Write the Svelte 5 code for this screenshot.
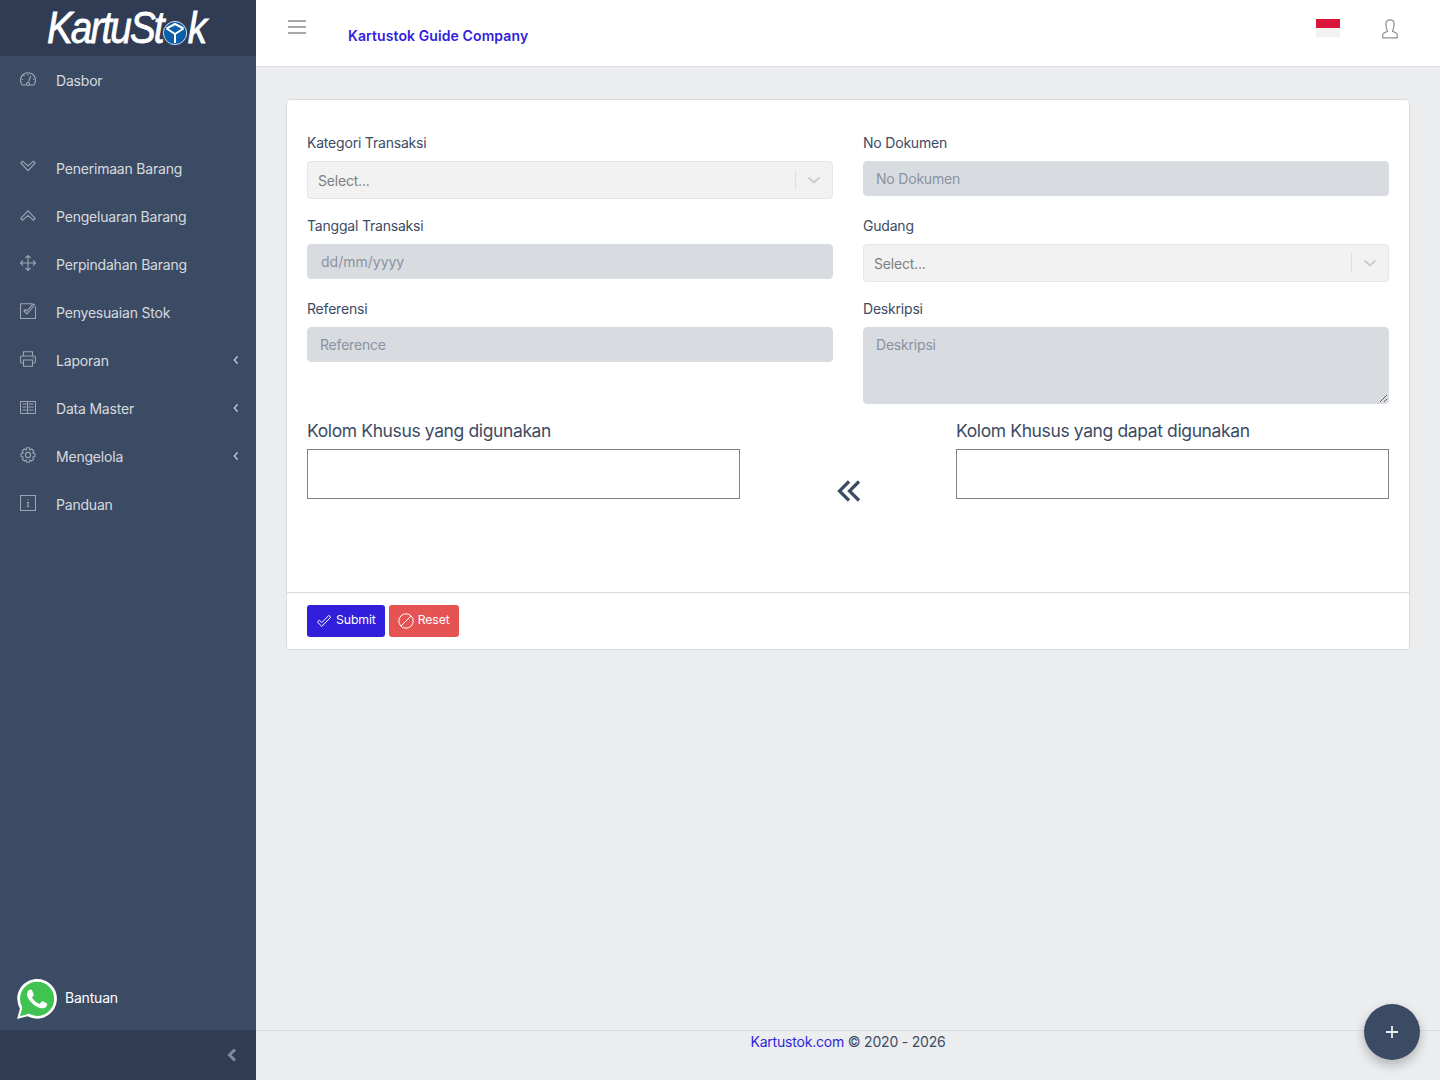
<script>
	const navTop = [{ label: 'Dasbor', d: 'M3.4 14H2.2A7.5 7.5 0 1 1 13.8 14H12.6M8.7 10.6L10.6 5M8 3V4.4M3 8.5H1.8M14.2 8.5H13M4.4 5L3.6 4.2M6.4 14H3.4M9.6 14H12.6M9.5 13a1.5 1.5 0 1 1-3 0a1.5 1.5 0 0 1 3 0z' }];

	const navMain = [
		{ label: 'Penerimaan Barang', d: 'M.8 4L8 11.6L15.2 4L13.4 2.2L8 7L2.6 2.2Z' },
		{ label: 'Pengeluaran Barang', d: 'M.8 11.4L8 3.8L15.2 11.4L13.4 13.2L8 8.4L2.6 13.2Z' },
		{ label: 'Perpindahan Barang', d: 'M8 .6V15.4M.6 8H15.4M5.4 3L8 .6L10.6 3M5.4 13L8 15.4L10.6 13M3 5.4L.6 8L3 10.6M13 5.4L15.4 8L13 10.6' },
		{ label: 'Penyesuaian Stok', d: 'M12 .8H.5V15.5H15.5V3.5M4 8L7 11L14.5 2L13 .8L7 8L5.2 6.6Z' },
		{ label: 'Laporan', chevron: true, d: 'M3.5 5V.8H12.5V5M3.5 12H1.8Q.6 12 .6 10.8V6.4Q.6 5 2 5H14Q15.4 5 15.4 6.4V10.8Q15.4 12 14.2 12H12.5M3.5 9H12.5V15.2H3.5ZM12.5 7H13.5' },
		{ label: 'Data Master', chevron: true, d: 'M.5 2.5H15.5V14.5H.5ZM2.5 5H6.5M2.5 8H6.5M2.5 11H6.5M8.5 5H13.5M8.5 8H13.5M8.5 11H13.5M7.5 2.5V14.5' },
		{ label: 'Mengelola', chevron: true, d: 'M6.6 .8H9.4L9.9 3L11.7 2L13.8 4L12.8 5.9L15 6.6V9.4L12.8 10.1L13.8 12L11.7 14L9.9 13L9.4 15.2H6.6L6.1 13L4.3 14L2.2 12L3.2 10.1L1 9.4V6.6L3.2 5.9L2.2 4L4.3 2L6.1 3ZM10.6 8a2.6 2.6 0 1 1-5.2 0a2.6 2.6 0 0 1 5.2 0z' },
		{ label: 'Panduan', d: 'M.5 .5H15.5V15.5H.5ZM8.2 4.4V5.4M7 7.6H8.4L7.8 11.4Q7.7 12.2 9 11.6' }
	];
</script>

<div class="layout">
	<aside class="sidebar">
		<div class="brand">
			<span class="logo">KartuSt<svg class="logo-cube" viewBox="0 0 24 24" preserveAspectRatio="none" aria-hidden="true">
					<circle cx="12" cy="12" r="11.6" fill="#0b5ea8" stroke="#fff" stroke-width=".8" />
					<path d="M12 13V22M12 13L3.5 7.5M12 13L20.5 7.5M3.5 7.5L12 3L20.5 7.5" fill="none" stroke="#fff" stroke-width="2" />
				</svg>k</span>
		</div>

		<nav class="nav">
			{#each navTop as item}
				<a class="nav-link" href="#top">
					<svg class="nav-icon" viewBox="0 0 16 16"><path d={item.d} /></svg>
					{item.label}
				</a>
			{/each}
			<div class="nav-gap"></div>
			{#each navMain as item}
				<a class="nav-link" href="#top">
					<svg class="nav-icon" viewBox="0 0 16 16"><path d={item.d} /></svg>
					{item.label}
					{#if item.chevron}
						<svg class="nav-chevron" viewBox="0 0 6 10"><path d="M4.6 1.4L1.4 5L4.6 8.6" /></svg>
					{/if}
				</a>
			{/each}
		</nav>

		<div class="help">
			<svg class="wa" viewBox="0 0 24 24" aria-hidden="true">
				<path fill="#fff" d="M.057 24l1.687-6.163a11.867 11.867 0 01-1.587-5.946C.16 5.335 5.495 0 12.05 0a11.817 11.817 0 018.413 3.488 11.824 11.824 0 013.48 8.414c-.003 6.557-5.338 11.892-11.893 11.892a11.9 11.9 0 01-5.688-1.448L.057 24z" />
				<path fill="#40c351" transform="translate(1.7 1.7) scale(.86)" d="M.057 24l1.687-6.163a11.867 11.867 0 01-1.587-5.946C.16 5.335 5.495 0 12.05 0a11.817 11.817 0 018.413 3.488 11.824 11.824 0 013.48 8.414c-.003 6.557-5.338 11.892-11.893 11.892a11.9 11.9 0 01-5.688-1.448L.057 24z" />
				<path fill="#fff" d="M17.472 14.382c-.297-.149-1.758-.867-2.03-.967-.273-.099-.471-.148-.67.15-.197.297-.767.966-.94 1.164-.173.199-.347.223-.644.075-.297-.15-1.255-.463-2.39-1.475-.883-.788-1.48-1.761-1.653-2.059-.173-.297-.018-.458.13-.606.134-.133.298-.347.446-.52.149-.174.198-.298.298-.497.099-.198.05-.371-.025-.52-.075-.149-.669-1.612-.916-2.207-.242-.579-.487-.5-.669-.51-.173-.008-.371-.01-.57-.01-.198 0-.52.074-.792.372-.272.297-1.04 1.016-1.04 2.479 0 1.462 1.065 2.875 1.213 3.074.149.198 2.096 3.2 5.077 4.487.709.306 1.262.489 1.694.625.712.227 1.36.195 1.871.118.571-.085 1.758-.719 2.006-1.413.248-.694.248-1.289.173-1.413-.074-.124-.272-.198-.57-.347" />
			</svg>
			<span>Bantuan</span>
		</div>

		<div class="minimizer">
			<svg viewBox="0 0 10 14" aria-hidden="true"><path d="M8 1.5L2.5 7L8 12.5" /></svg>
		</div>
	</aside>

	<div class="main">
		<header class="topbar">
			<svg class="burger" viewBox="0 0 18 14" aria-hidden="true"><path d="M0 1H18M0 7H18M0 13H18" /></svg>
			<span class="company">Kartustok Guide Company</span>
			<span class="flag"></span>
			<svg class="user" viewBox="0 0 16 20" aria-hidden="true">
				<path d="M5.3 11.2V12.4L1.6 14.2Q.8 14.6 .8 15.6V18.8H15.2V15.6Q15.2 14.6 14.4 14.2L10.7 12.4V11.2Q12 9.8 12 6V4.8Q12 .8 8 .8T4 4.8V6Q4 9.8 5.3 11.2Z" />
			</svg>
		</header>

		<main class="content">
			<section class="card">
				<div class="card-body">
					<div class="form-grid">
						<div class="group">
							<label for="kategori">Kategori Transaksi</label>
							<div class="select" id="kategori">
								<span>Select...</span>
								<i class="select-sep"></i>
								<svg viewBox="0 0 20 20"><path d="M4.5 7.5L10 12.5L15.5 7.5" /></svg>
							</div>
						</div>
						<div class="group">
							<label for="dokumen">No Dokumen</label>
							<input id="dokumen" placeholder="No Dokumen" disabled />
						</div>
						<div class="group">
							<label for="tanggal">Tanggal Transaksi</label>
							<input id="tanggal" class="date" placeholder="dd/mm/yyyy" disabled />
						</div>
						<div class="group">
							<label for="gudang">Gudang</label>
							<div class="select" id="gudang">
								<span>Select...</span>
								<i class="select-sep"></i>
								<svg viewBox="0 0 20 20"><path d="M4.5 7.5L10 12.5L15.5 7.5" /></svg>
							</div>
						</div>
						<div class="group">
							<label for="referensi">Referensi</label>
							<input id="referensi" placeholder="Reference" disabled />
						</div>
						<div class="group">
							<label for="deskripsi">Deskripsi</label>
							<textarea id="deskripsi" placeholder="Deskripsi" disabled></textarea>
						</div>
					</div>

					<div class="columns">
						<div>
							<h5>Kolom Khusus yang digunakan</h5>
							<div class="drop"></div>
						</div>
						<svg class="move" viewBox="0 0 24 22" aria-hidden="true"><path d="M12 1.5L2.5 11L12 20.5M22 1.5L12.5 11L22 20.5" /></svg>
						<div>
							<h5>Kolom Khusus yang dapat digunakan</h5>
							<div class="drop"></div>
						</div>
					</div>
				</div>

				<div class="card-footer">
					<button class="btn primary">
						<svg viewBox="0 0 16 16"><path d="M1.4 9L3.4 7.2L5.8 9.6L12.8 2.4L14.8 4.2L5.8 13.4Z" /></svg>
						<span>Submit</span>
					</button>
					<button class="btn danger">
						<svg viewBox="0 0 16 16"><circle cx="8" cy="8" r="7.2" /><path d="M3 13L13 3" /></svg>
						<span>Reset</span>
					</button>
				</div>
			</section>
		</main>

		<footer class="footer">
			<span><a href="#top">Kartustok.com</a> © 2020 - 2026</span>
		</footer>
	</div>

	<button class="fab" aria-label="Tambah">
		<svg viewBox="0 0 14 14"><path d="M7 1V13M1 7H13" /></svg>
	</button>
</div>

<style>
	:global(body) {
		margin: 0;
		font-family: Inter, "Liberation Sans", sans-serif;
		font-size: 14px;
		line-height: 21px;
		letter-spacing: -0.2px;
		color: #3c4b64;
		background: #ebedef;
	}

	.layout {
		display: flex;
		height: 1080px;
		overflow: hidden;
	}

	/* sidebar */
	.sidebar {
		flex: 0 0 256px;
		display: flex;
		flex-direction: column;
		background: #3c4b64;
		color: rgba(255, 255, 255, 0.8);
	}

	.brand {
		height: 56px;
		background: #303c54;
		display: flex;
		align-items: center;
		justify-content: center;
	}

	.logo {
		display: inline-flex;
		align-items: center;
		margin-right: 4px;
		font-family: "Liberation Sans", sans-serif;
		font-style: italic;
		font-size: 45px;
		line-height: 56px;
		letter-spacing: -2.2px;
		color: #fff;
		-webkit-text-stroke: 0.8px #fff;
		transform: scaleX(0.86);
	}

	.logo-cube {
		width: 28px;
		height: 24px;
		margin: 9px 1px 0 0;
		flex: none;
	}

	.nav {
		flex: 1;
	}

	.nav-gap {
		height: 40px;
	}

	.nav-link {
		display: flex;
		align-items: center;
		height: 48px;
		padding-left: 20px;
		color: inherit;
		text-decoration: none;
	}

	.nav-icon {
		width: 16px;
		height: 16px;
		margin: -2px 20px 0 0;
		fill: none;
		stroke: rgba(255, 255, 255, 0.5);
		stroke-width: 1.1;
		flex: none;
	}

	.nav-chevron {
		width: 6px;
		height: 10px;
		margin: -1px 17px 0 auto;
		fill: none;
		stroke: rgba(255, 255, 255, 0.6);
		stroke-width: 1.6;
	}

	.help {
		display: flex;
		align-items: center;
		gap: 8px;
		height: 50px;
		margin-bottom: 6px;
		padding-left: 17px;
		color: #fff;
	}

	.help span {
		margin-top: -4px;
	}

	.wa {
		width: 40px;
		height: 40px;
		flex: none;
	}

	.minimizer {
		height: 50px;
		background: #303c54;
		display: flex;
		align-items: center;
		justify-content: flex-end;
		padding-right: 19px;
	}

	.minimizer svg {
		width: 10px;
		height: 14px;
		fill: none;
		stroke: rgba(255, 255, 255, 0.4);
		stroke-width: 3;
	}

	/* top bar */
	.main {
		flex: 1;
		min-width: 0;
		display: flex;
		flex-direction: column;
	}

	.topbar {
		height: 66px;
		flex: none;
		background: #fff;
		border-bottom: 1px solid #d8dbe0;
		display: flex;
		align-items: flex-start;
		padding: 0 42px 0 32px;
	}

	.burger {
		width: 18px;
		height: 14px;
		margin-top: 20px;
		fill: none;
		stroke: #8a8a93;
		stroke-width: 1.3;
	}

	.company {
		margin: 25px 0 0 42px;
		font-weight: 600;
		letter-spacing: 0.1px;
		color: #321fdb;
	}

	.flag {
		width: 24px;
		height: 18px;
		margin: 19px 0 0 auto;
		background: linear-gradient(#dc143c 50%, #f2f2f2 50%);
	}

	.user {
		width: 16px;
		height: 20px;
		margin: 19px 0 0 42px;
		fill: none;
		stroke: #8a8d96;
		stroke-width: 1.2;
	}

	/* form card */
	.content {
		flex: 1;
		padding: 32px 30px 0;
	}

	.card {
		background: #fff;
		border: 1px solid #d8dbe0;
		border-radius: 4px;
	}

	.card-body {
		padding: 32px 20px 90px;
	}

	.form-grid {
		display: grid;
		grid-template-columns: 1fr 1fr;
		column-gap: 30px;
	}

	.group {
		padding-bottom: 16px;
		display: flex;
		flex-direction: column;
		align-items: stretch;
	}

	label {
		margin-bottom: 8px;
	}

	input,
	textarea {
		box-sizing: border-box;
		width: 100%;
		height: 35px;
		padding: 6px 12px;
		border: 1px solid #d8dbe0;
		border-radius: 4px;
		background: #d8dbe0;
		font: inherit;
		letter-spacing: inherit;
	}

	input::placeholder,
	textarea::placeholder {
		color: #8a93a2;
		opacity: 1;
	}

	.date {
		padding-left: 13px;
		letter-spacing: 0;
	}

	textarea {
		display: block;
		height: 77px;
		resize: vertical;
	}

	.select {
		box-sizing: border-box;
		height: 38px;
		display: flex;
		align-items: center;
		padding: 0 8px 0 10px;
		background: #f2f2f2;
		border: 1px solid #e6e6e6;
		border-radius: 4px;
		color: #808080;
	}

	.select span {
		flex: 1;
	}

	.select-sep {
		width: 1px;
		height: 20px;
		background: #e0e0e0;
		margin-right: 8px;
	}

	.select svg {
		width: 20px;
		height: 20px;
		fill: none;
		stroke: #cccccc;
		stroke-width: 2;
	}

	.columns {
		display: grid;
		grid-template-columns: 433px 1fr 433px;
	}

	h5 {
		margin: 0 0 8px;
		font-size: 17.5px;
		font-weight: 400;
		line-height: 21px;
		letter-spacing: -0.38px;
	}

	.drop {
		box-sizing: border-box;
		height: 50px;
		border: 1px solid #808080;
	}

	.move {
		justify-self: center;
		width: 24px;
		height: 22px;
		margin: 60px 0 0 1px;
		fill: none;
		stroke: #3c4b64;
		stroke-width: 3.2;
	}

	.card-footer {
		border-top: 1px solid #d8dbe0;
		padding: 12px 20px;
		display: flex;
		gap: 4px;
	}

	.btn {
		height: 32px;
		display: flex;
		align-items: center;
		gap: 4px;
		padding: 0 9px;
		border: 0;
		border-radius: 3px;
		color: #fff;
		font: inherit;
		font-size: 12.25px;
		letter-spacing: -0.1px;
	}

	.btn span {
		margin-top: -4px;
	}

	.btn svg {
		width: 16px;
		height: 16px;
		fill: none;
		stroke: #fff;
		stroke-width: 1;
		flex: none;
	}

	.primary {
		background: #321fdb;
	}

	.danger {
		background: #e55353;
	}

	/* footer */
	.footer {
		height: 49px;
		flex: none;
		border-top: 1px solid #d8dbe0;
		text-align: center;
	}

	.footer a {
		color: #321fdb;
		text-decoration: none;
	}

	.fab {
		position: fixed;
		right: 20px;
		bottom: 20px;
		width: 56px;
		height: 56px;
		padding: 0;
		border: 0;
		border-radius: 50%;
		background: #3c4b64;
		box-shadow: 0 5px 11px rgba(0, 0, 0, 0.25);
		display: flex;
		align-items: center;
		justify-content: center;
	}

	.fab svg {
		width: 14px;
		height: 14px;
		fill: none;
		stroke: #ebedef;
		stroke-width: 1.8;
	}
</style>
